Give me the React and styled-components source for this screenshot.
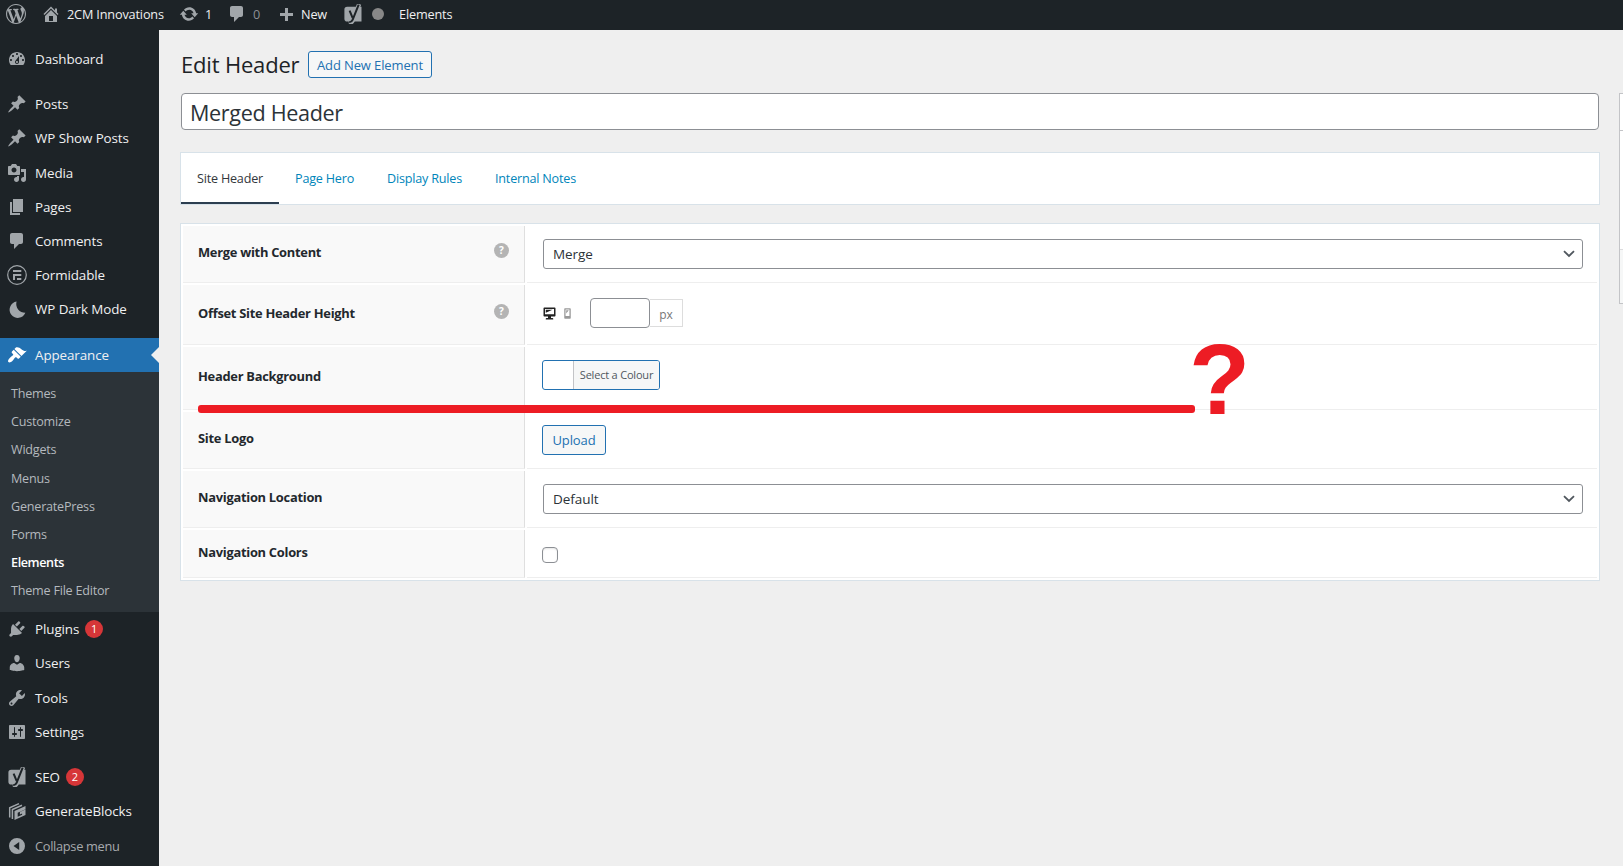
// dependencies
import React from "react";
import styled, { createGlobalStyle } from "styled-components";

const GlobalStyle = createGlobalStyle`
  * {
    box-sizing: border-box;
  }

  body {
    margin: 0;
    background-color: #efefef;
    color: #3c434a;
    font-family: "Open Sans", "Noto Sans", sans-serif;
    font-size: 13px;
    overflow: hidden;
  }
`;

const Page = styled.div`
  height: 866px;
  display: flex;
  flex-direction: column;
  overflow: hidden;
`;

const Body = styled.div`
  flex: 1;
  display: flex;
  min-height: 0;
`;

const Icon = styled.svg`
  display: block;
  flex: none;
  width: ${(props) => props.$size || 20}px;
  height: ${(props) => props.$size || 20}px;
  fill: currentColor;
`;

// admin bar
const AdminBar = styled.header`
  flex: none;
  height: 30px;
  display: flex;
  align-items: center;
  padding: 0 0 2px 6px;
  background-color: #1d2327;
  color: #f0f0f1;
`;

const BarItem = styled.a`
  display: flex;
  align-items: center;
  gap: ${(props) => props.$gap || 5}px;
  width: ${(props) => props.$width}px;
  color: ${(props) => (props.$muted ? "#8c8f94" : "#f0f0f1")};
  font-size: 12.7px;
  letter-spacing: -0.16px;
  line-height: 28px;
  white-space: nowrap;

  svg {
    color: #a1a6aa;
  }
`;

const StatusDot = styled.span`
  width: 12px;
  height: 12px;
  border-radius: 50%;
  background-color: #888;
`;

// side menu
const Sidebar = styled.nav`
  flex: none;
  width: 159px;
  padding-top: 12px;
  background-color: #1d2327;
`;

const MenuItem = styled.a`
  position: relative;
  display: flex;
  align-items: center;
  gap: 8px;
  height: 34.2px;
  padding: 0 0 0.8px 7px;
  margin-top: ${(props) => (props.$separated ? "11.4px" : "0")};
  background-color: ${(props) => (props.$active ? "#2271b1" : "transparent")};
  color: ${(props) => (props.$muted ? "#a7aaad" : "#f0f0f1")};
  font-size: ${(props) => (props.$muted ? "12.8px" : "13.4px")};
  letter-spacing: ${(props) => (props.$muted ? "-0.3px" : "-0.09px")};
  white-space: nowrap;

  svg {
    color: ${(props) => (props.$active ? "#fff" : "#a1a6aa")};
  }
`;

const ActiveArrow = styled.span`
  position: absolute;
  right: 0;
  top: 9px;
  border: 8px solid transparent;
  border-left: 0;
  border-right-color: #efefef;
`;

const Badge = styled.span`
  width: 18px;
  height: 18px;
  margin-left: -2px;
  border-radius: 9px;
  background-color: #d63638;
  color: #fff;
  font-size: 11px;
  line-height: 18px;
  text-align: center;
  letter-spacing: 0;
`;

const SubMenu = styled.div`
  height: 240px;
  padding: 7.5px 0 0 11px;
  background-color: #2c3338;
`;

const SubItem = styled.a`
  display: block;
  height: 28.2px;
  line-height: 28px;
  color: ${(props) => (props.$current ? "#fff" : "#b4b9be")};
  font-size: 12.6px;
  font-weight: ${(props) => (props.$current ? 600 : 400)};
  letter-spacing: ${(props) => (props.$current ? "-0.4px" : "-0.22px")};
`;

// content
const Main = styled.main`
  flex: none;
  width: 1441px;
  padding: 21px 0 0 22px;
`;

const TitleRow = styled.div`
  display: flex;
  align-items: center;
  height: 27px;
`;

const PageTitle = styled.h1`
  width: 127px;
  margin: 0;
  color: #1d2327;
  font-size: 22px;
  font-weight: 400;
  letter-spacing: -0.18px;
  line-height: 27px;
`;

const Button = styled.button`
  height: ${(props) => props.$height || 30}px;
  width: ${(props) => props.$width}px;
  padding: 0;
  border: 1px solid #2271b1;
  border-radius: 3px;
  background-color: #f6f7f7;
  color: #2271b1;
  font-family: inherit;
  font-size: 13px;
  font-weight: ${(props) => props.$weight || 400};
  letter-spacing: -0.12px;
`;

const TitleInput = styled.input`
  display: block;
  width: 1418px;
  height: 37px;
  margin-top: 15px;
  padding: 2px 8px 0;
  border: 1px solid #8c8f94;
  border-radius: 4px;
  background-color: #fff;
  color: #2c3338;
  font-family: inherit;
  font-size: 21.6px;
  letter-spacing: -0.34px;
`;

const Tabs = styled.div`
  display: flex;
  width: 1420px;
  height: 53px;
  margin: 22px 0 0 -1px;
  border: 1px solid #d8e2e9;
  background-color: #fff;
`;

const Tab = styled.a`
  width: ${(props) => props.$width}px;
  height: 51px;
  padding-left: 16px;
  border-bottom: 2px solid ${(props) => (props.$active ? "#2c3e50" : "transparent")};
  color: ${(props) => (props.$active ? "#32373c" : "#0085ba")};
  font-size: 12.6px;
  letter-spacing: -0.2px;
  line-height: 52px;
  white-space: nowrap;
`;

const Settings = styled.section`
  position: relative;
  display: flex;
  flex-direction: column;
  gap: 2px;
  width: 1420px;
  margin: 18px 0 0 -1px;
  padding: 2px;
  border: 1px solid #d8e2e9;
  background-color: #fff;
`;

const Row = styled.div`
  display: flex;
  gap: 2px;
  height: ${(props) => props.$height}px;
`;

const RowLabel = styled.div`
  flex: none;
  display: flex;
  justify-content: space-between;
  width: 342px;
  padding: ${(props) => props.$top}px 15px 0 15px;
  border-right: 1px solid #dfdfdf;
  border-bottom: 1px solid #eee;
  background-color: #f9f9f9;
  color: #23282d;
  font-size: 12.9px;
  font-weight: 700;
  letter-spacing: -0.28px;
  line-height: 17px;
`;

const Help = styled.span`
  width: 15px;
  height: 15px;
  margin-top: -1px;
  border-radius: 50%;
  background-color: #b4b4b4;
  color: #fff;
  font-size: 10px;
  letter-spacing: 0;
  line-height: 15px;
  text-align: center;
`;

const RowContent = styled.div`
  flex: 1;
  display: flex;
  align-items: flex-start;
  padding: ${(props) => props.$top || 13}px 14px 0 ${(props) => props.$left || 15}px;
  border-bottom: 1px solid #eee;
`;

const Select = styled.div`
  flex: 1;
  display: flex;
  align-items: center;
  justify-content: space-between;
  height: 30px;
  padding: 0 7px 0 9px;
  border: 1px solid #8c8f94;
  border-radius: 3px;
  color: #2c3338;
  font-size: 13.5px;
  letter-spacing: -0.05px;
`;

const Devices = styled.div`
  display: flex;
  align-items: center;
  gap: 4px;
  width: 48px;
  height: 30px;
  color: #222;

  svg + svg {
    color: #999;
  }
`;

const HeightInput = styled.input`
  width: 60px;
  height: 30px;
  border: 1px solid #8c8f94;
  border-radius: 4px;
  background-color: #fff;
`;

const Unit = styled.span`
  width: 33px;
  height: 28px;
  margin-top: 1px;
  border: 1px solid #ddd;
  border-left: 0;
  color: #777;
  font-size: 12px;
  line-height: 29px;
  text-align: center;
`;

const ColorPicker = styled.button`
  display: flex;
  width: 118px;
  height: 30px;
  padding: 0;
  border: 1px solid #2271b1;
  border-radius: 3px;
  background-color: #fff;
  overflow: hidden;
`;

const ColorLabel = styled.span`
  flex: 1;
  margin-left: 30px;
  border-left: 1px solid #c3c4c7;
  background-color: #f6f7f7;
  color: #50575e;
  font-family: "Open Sans", "Noto Sans", sans-serif;
  font-size: 11px;
  letter-spacing: -0.2px;
  line-height: 28px;
  white-space: nowrap;
`;

const Checkbox = styled.span`
  width: 16px;
  height: 16px;
  border: 1px solid #8c8f94;
  border-radius: 4px;
  background-color: #fff;
  box-shadow: inset 0 1px 2px rgba(0, 0, 0, 0.1);
`;

// hand drawn marker over the table
const MarkerLine = styled.span`
  position: absolute;
  left: 17px;
  top: 181px;
  width: 997px;
  height: 8px;
  border-radius: 3px;
  background-color: #ed1c24;
`;

const MarkerQuestion = styled.span`
  position: absolute;
  left: 1008px;
  top: 105px;
  color: #ed1c24;
  font-family: "Liberation Sans", Arial, sans-serif;
  font-size: 100px;
  font-weight: 700;
  line-height: 100px;
`;

const SidePanel = styled.aside`
  flex: none;
  width: 200px;
  height: 211px;
  margin: 63px 0 0 19px;
  border: 1px solid #c3c4c7;
  background-color: #fff;
`;

const PanelPart = styled.div`
  height: ${(props) => props.$height}px;
  border-bottom: 1px solid ${(props) => props.$line};
`;

const PanelFooter = styled.div`
  height: 53px;
  background-color: #f6f7f7;
`;

const paths = {
  wordpress:
    "M20 10c0-5.51-4.49-10-10-10C4.48 0 0 4.49 0 10c0 5.52 4.48 10 10 10 5.51 0 10-4.48 10-10zM7.78 15.37L4.37 6.22c.55-.02 1.17-.08 1.17-.08.5-.06.44-1.13-.06-1.11 0 0-1.45.11-2.37.11-.18 0-.37 0-.58-.01C4.12 2.69 6.87 1.11 10 1.11c2.33 0 4.45.87 6.05 2.34-.68-.11-1.65.39-1.65 1.58 0 .74.45 1.36.9 2.1.35.61.55 1.36.55 2.46 0 1.49-1.4 5-1.4 5l-3.03-8.37c.54-.02.82-.17.82-.17.5-.05.44-1.25-.06-1.22 0 0-1.44.12-2.38.12-.87 0-2.33-.12-2.33-.12-.5-.03-.56 1.2-.06 1.22l.92.08 1.26 3.41zM17.41 10c.24-.64.74-1.87.43-4.25.7 1.29 1.05 2.71 1.05 4.25 0 3.29-1.73 6.24-4.4 7.78.97-2.59 1.94-5.2 2.92-7.78zM6.1 18.09C3.12 16.65 1.11 13.53 1.11 10c0-1.3.23-2.48.72-3.59C3.25 10.3 4.67 14.2 6.1 18.09zm4.03-6.63l2.58 6.98c-.86.29-1.76.45-2.71.45-.79 0-1.57-.11-2.29-.33.81-2.38 1.62-4.74 2.42-7.1z",
  home: "M16 8.5l1.53 1.53-1.06 1.06L10 4.6l-6.47 6.49-1.06-1.06L10 2.5l4 4v-2h2v4zm-6-2.46l6 5.99V18H4v-5.97zM12 17v-5H8v5h4z",
  update:
    "M10.2 3.28c3.53 0 6.43 2.61 6.92 6h2.08l-3.5 4-3.5-4h2.32c-.45-1.97-2.21-3.45-4.32-3.45-1.45 0-2.73.71-3.54 1.78L4.95 5.66C6.23 4.2 8.11 3.28 10.2 3.28zm-.4 13.44c-3.52 0-6.43-2.61-6.92-6H.8l3.5-4c1.17 1.33 2.33 2.67 3.5 4H5.48c.45 1.97 2.21 3.45 4.32 3.45 1.45 0 2.73-.71 3.54-1.78l1.71 1.95c-1.28 1.46-3.15 2.38-5.25 2.38z",
  plus: "M17 9v3h-5v5H9v-5H4V9h5V4h3v5h5z",
  dashboard:
    "M3.76 16h12.48c1.1-1.37 1.76-3.11 1.76-5 0-4.42-3.58-8-8-8s-8 3.58-8 8c0 1.89.66 3.63 1.76 5zM10 4c.55 0 1 .45 1 1s-.45 1-1 1-1-.45-1-1 .45-1 1-1zM6 6c.55 0 1 .45 1 1s-.45 1-1 1-1-.45-1-1 .45-1 1-1zm8 0c.55 0 1 .45 1 1s-.45 1-1 1-1-.45-1-1 .45-1 1-1zm-5.37 5.55L12 7v6c0 1.1-.9 2-2 2s-2-.9-2-2c0-.57.24-1.08.63-1.45zM4 10c.55 0 1 .45 1 1s-.45 1-1 1-1-.45-1-1 .45-1 1-1zm12 0c.55 0 1 .45 1 1s-.45 1-1 1-1-.45-1-1 .45-1 1-1zm-5 3c0-.55-.45-1-1-1s-1 .45-1 1 .45 1 1 1 1-.45 1-1z",
  pin: "M10.44 3.02l1.82-1.82 6.36 6.35-1.83 1.82c-1.05-.68-2.48-.57-3.41.36l-.75.75c-.92.93-1.04 2.35-.35 3.41l-1.83 1.82-2.41-2.41-2.8 2.79c-.42.42-3.38 2.71-3.8 2.29s1.86-3.39 2.28-3.81l2.79-2.79L4.1 9.36l1.83-1.82c1.05.69 2.48.57 3.4-.36l.75-.75c.93-.92 1.05-2.35.36-3.41z",
  media:
    "M13 11V4c0-.55-.45-1-1-1h-1.67L9 1H5L3.67 3H2c-.55 0-1 .45-1 1v7c0 .55.45 1 1 1h10c.55 0 1-.45 1-1zM7 4.5c1.38 0 2.5 1.12 2.5 2.5S8.38 9.5 7 9.5 4.5 8.38 4.5 7 5.62 4.5 7 4.5zM14 6h5v10.5c0 1.38-1.12 2.5-2.5 2.5S14 17.88 14 16.5s1.12-2.5 2.5-2.5c.17 0 .34.02.5.05V9h-3V6zm-4 8.05V13h2v3.5c0 1.38-1.12 2.5-2.5 2.5S7 17.88 7 16.5 8.12 14 9.5 14c.17 0 .34.02.5.05z",
  pages: "M6 15V2h10v13H6zm-1 1h8v2H3V5h2v11z",
  comments: "M5 2h9c1.1 0 2 .9 2 2v7c0 1.1-.9 2-2 2h-2l-5 5v-5H5c-1.1 0-2-.9-2-2V4c0-1.1.9-2 2-2z",
  moon: "M9.6 2.6A8.200 8.200 0 1 0 18.400 13.800A8.800 8.800 0 0 1 9.600 2.600z",
  appearance:
    "M14.48 11.06L7.41 3.99l1.5-1.5c.5-.56 2.3-.47 3.51.32 1.21.8 1.43 1.28 2.91 2.1 1.18.64 2.45 1.26 4.45.85zm-.71.71L6.7 4.7 4.93 6.47c-.39.39-.39 1.02 0 1.41l1.06 1.06c.39.39.39 1.03 0 1.42-.6.6-1.43 1.11-2.21 1.69-.35.26-.7.53-1.01.84C1.43 14.23.4 16.08 1.4 17.07c.99 1 2.84-.03 4.18-1.36.31-.31.58-.66.85-1.02.57-.78 1.08-1.61 1.69-2.21.39-.39 1.02-.39 1.41 0l1.06 1.06c.39.39 1.02.39 1.41 0z",
  plugins:
    "M13.11 4.36L9.87 7.6 8 5.73l3.24-3.24c.35-.34 1.05-.2 1.56.32.52.51.66 1.21.31 1.55zm-8 1.77l.91-1.12 9.01 9.01-1.19.84c-.71.71-2.63 1.16-3.82 1.16H6.14L4.9 17.26c-.59.59-1.54.59-2.12 0-.59-.58-.59-1.53 0-2.12l1.24-1.24v-3.88c0-1.13.4-3.19 1.09-3.89zm7.26 3.97l3.24-3.24c.34-.35 1.04-.21 1.55.31.52.51.66 1.21.31 1.55l-3.24 3.25z",
  users:
    "M10 9.25c-2.27 0-2.73-3.44-2.73-3.44C7 4.02 7.82 2 9.97 2c2.16 0 2.98 2.02 2.71 3.81 0 0-.41 3.44-2.68 3.44zm0 2.57L12.72 10c2.39 0 4.52 2.33 4.52 4.53v2.49s-3.65 1.13-7.24 1.13c-3.65 0-7.24-1.13-7.24-1.13v-2.49c0-2.25 1.94-4.48 4.47-4.48z",
  tools:
    "M16.68 9.77c-1.34 1.34-3.3 1.67-4.95.99l-5.41 6.52c-.99.99-2.59.99-3.58 0s-.99-2.59 0-3.57l6.52-5.42c-.68-1.65-.35-3.61.99-4.95 1.28-1.28 3.12-1.62 4.72-1.06l-2.89 2.89 2.82 2.82 2.86-2.87c.53 1.58.18 3.39-1.08 4.65zM3.81 16.21c.4.39 1.04.39 1.43 0 .4-.4.4-1.04 0-1.43-.39-.4-1.03-.4-1.43 0-.39.39-.39 1.03 0 1.43z",
  settings:
    "M18 16V4c0-.55-.45-1-1-1H3c-.55 0-1 .45-1 1v12c0 .55.45 1 1 1h14c.55 0 1-.45 1-1zM8 11h1c.55 0 1 .45 1 1s-.45 1-1 1H8v1.5c0 .28-.22.5-.5.5s-.5-.22-.5-.5V13H6c-.55 0-1-.45-1-1s.45-1 1-1h1V5.5c0-.28.22-.5.5-.5s.5.22.5.5V11zm5-2h-1c-.55 0-1-.45-1-1s.45-1 1-1h1V5.5c0-.28.22-.5.5-.5s.5.22.5.5V7h1c.55 0 1 .45 1 1s-.45 1-1 1h-1v5.5c0 .28-.22.5-.5.5s-.5-.22-.5-.5V9z",
  collapse: "M10 2a8 8 0 1 1 0 16a8 8 0 0 1 0-16zM12.200 6L6.500 10l5.700 4z",
  desktop:
    "M3 2h14c.55 0 1 .45 1 1v10c0 .55-.45 1-1 1h-5v2h2c.55 0 1 .45 1 1v1H5v-1c0-.55.45-1 1-1h2v-2H3c-.55 0-1-.45-1-1V3c0-.55.45-1 1-1zm13 9V4H4v7h12zM5 5h9L5 9V5z",
  phone:
    "M6 2h8c.55 0 1 .45 1 1v14c0 .55-.45 1-1 1H6c-.55 0-1-.45-1-1V3c0-.55.45-1 1-1zm7 12V4H7v10h6zM8 5h4l-4 5V5z",
};

const Dashicon = ({ name, size }) => (
  <Icon viewBox="0 0 20 20" $size={size}>
    <path fillRule={name === "collapse" ? "evenodd" : "nonzero"} d={paths[name]} />
  </Icon>
);

const YoastIcon = () => (
  <Icon viewBox="0 0 20 20">
    <path d="M4.200 2.700h14.300V17.500H4.200a2.800 2.800 0 0 1-2.800-2.800V5.500A2.800 2.800 0 0 1 4.200 2.700z" />
    <path d="M16.200 0L9.900 16.200Q8.900 19 5.800 19.200" fill="none" stroke="#a1a6aa" strokeWidth="4.200" />
    <path d="M15.700 .6L9.600 15.900Q8.800 18 6.200 18.200" fill="none" stroke="#1d2327" strokeWidth="2" />
    <path d="M6.600 6.700L9.600 13.800" fill="none" stroke="#1d2327" strokeWidth="2" />
  </Icon>
);

const FormidableIcon = () => (
  <Icon viewBox="0 0 20 20">
    <circle cx="10" cy="10" r="9.300" fill="none" stroke="currentColor" strokeWidth="1.200" />
    <path d="M6 5h8.300v1.900H6zM6 9h8.300v1.900H8V15H6zM10 13h4.300v2H10z" />
  </Icon>
);

const BlocksIcon = () => (
  <Icon viewBox="0 0 20 20">
    <path
      d="M2.700 16.500V6.800L12 2.600M5.400 18V8.500L15 4.200"
      fill="none"
      stroke="currentColor"
      strokeWidth="1.500"
    />
    <path d="M7.500 9.900L18.500 5v3.200l-7.800 3.500v4l4.400-2v-1.200l-2.200 1v-2.500l5.600-2.500v5.600L7.500 19z" />
  </Icon>
);

const menuIcon = (name) => {
  if (name === "yoast") return <YoastIcon />;
  if (name === "formidable") return <FormidableIcon />;
  if (name === "blocks") return <BlocksIcon />;
  return <Dashicon name={name} />;
};

const topItems = [
  { label: "Dashboard", icon: "dashboard" },
  { label: "Posts", icon: "pin", separated: true },
  { label: "WP Show Posts", icon: "pin" },
  { label: "Media", icon: "media" },
  { label: "Pages", icon: "pages" },
  { label: "Comments", icon: "comments" },
  { label: "Formidable", icon: "formidable" },
  { label: "WP Dark Mode", icon: "moon" },
  { label: "Appearance", icon: "appearance", separated: true, active: true },
];

const subItems = [
  "Themes",
  "Customize",
  "Widgets",
  "Menus",
  "GeneratePress",
  "Forms",
  "Elements",
  "Theme File Editor",
];

const bottomItems = [
  { label: "Plugins", icon: "plugins", badge: 1 },
  { label: "Users", icon: "users" },
  { label: "Tools", icon: "tools" },
  { label: "Settings", icon: "settings" },
  { label: "SEO", icon: "yoast", badge: 2, separated: true },
  { label: "GenerateBlocks", icon: "blocks" },
  { label: "Collapse menu", icon: "collapse", muted: true },
];

const Menu = ({ items }) =>
  items.map((item) => (
    <MenuItem
      key={item.label}
      $separated={item.separated}
      $active={item.active}
      $muted={item.muted}
    >
      {menuIcon(item.icon)}
      <span>{item.label}</span>
      {item.badge && <Badge>{item.badge}</Badge>}
      {item.active && <ActiveArrow />}
    </MenuItem>
  ));

const Dropdown = ({ value }) => (
  <Select>
    {value}
    <svg width="12" height="8" viewBox="0 0 12 8">
      <path d="M1 1.200L6 6L11 1.200" fill="none" stroke="#50575e" strokeWidth="1.800" />
    </svg>
  </Select>
);

const SettingRow = ({ label, height, labelTop, help, top, left, children }) => (
  <Row $height={height}>
    <RowLabel $top={labelTop}>
      {label}
      {help && <Help>?</Help>}
    </RowLabel>
    <RowContent $top={top} $left={left}>
      {children}
    </RowContent>
  </Row>
);

const App = () => (
  <>
    <GlobalStyle />
    <Page>
      <AdminBar>
        <BarItem $width={35}>
          <Dashicon name="wordpress" />
        </BarItem>
        <BarItem $width={138} $gap={6}>
          <Dashicon name="home" />
          2CM Innovations
        </BarItem>
        <BarItem $width={48} $gap={6}>
          <Dashicon name="update" />
          1
        </BarItem>
        <BarItem $width={49} $gap={6} $muted>
          <Dashicon name="comments" />
          0
        </BarItem>
        <BarItem $width={67}>
          <Dashicon name="plus" />
          New
        </BarItem>
        <BarItem $width={56} $gap={9}>
          <YoastIcon />
          <StatusDot />
        </BarItem>
        <BarItem $width={60}>Elements</BarItem>
      </AdminBar>
      <Body>
        <Sidebar>
          <Menu items={topItems} />
          <SubMenu>
            {subItems.map((label) => (
              <SubItem key={label} $current={label === "Elements"}>
                {label}
              </SubItem>
            ))}
          </SubMenu>
          <Menu items={bottomItems} />
        </Sidebar>
        <Main>
          <TitleRow>
            <PageTitle>Edit Header</PageTitle>
            <Button $width={124} $height={27} $weight={500}>
              Add New Element
            </Button>
          </TitleRow>
          <TitleInput defaultValue="Merged Header" />
          <Tabs>
            <Tab $width={98} $active>
              Site Header
            </Tab>
            <Tab $width={92}>Page Hero</Tab>
            <Tab $width={108}>Display Rules</Tab>
            <Tab $width={110}>Internal Notes</Tab>
          </Tabs>
          <Settings>
            <SettingRow label="Merge with Content" height={57} labelTop={18} help left={16}>
              <Dropdown value="Merge" />
            </SettingRow>
            <SettingRow label="Offset Site Header Height" height={60} labelTop={20} help>
              <Devices>
                <Dashicon name="desktop" size={15} />
                <Dashicon name="phone" size={13} />
              </Devices>
              <HeightInput />
              <Unit>px</Unit>
            </SettingRow>
            <SettingRow label="Header Background" height={63} labelTop={21}>
              <ColorPicker>
                <ColorLabel>Select a Colour</ColorLabel>
              </ColorPicker>
            </SettingRow>
            <SettingRow label="Site Logo" height={57} labelTop={18}>
              <Button $width={64}>Upload</Button>
            </SettingRow>
            <SettingRow label="Navigation Location" height={57} labelTop={18} left={16}>
              <Dropdown value="Default" />
            </SettingRow>
            <SettingRow label="Navigation Colors" height={48} labelTop={14} top={17}>
              <Checkbox />
            </SettingRow>
            <MarkerLine />
            <MarkerQuestion>?</MarkerQuestion>
          </Settings>
        </Main>
        <SidePanel>
          <PanelPart $height={37} $line="#c3c4c7" />
          <PanelPart $height={119} $line="#dcdcde" />
          <PanelFooter />
        </SidePanel>
      </Body>
    </Page>
  </>
);

export default App;
